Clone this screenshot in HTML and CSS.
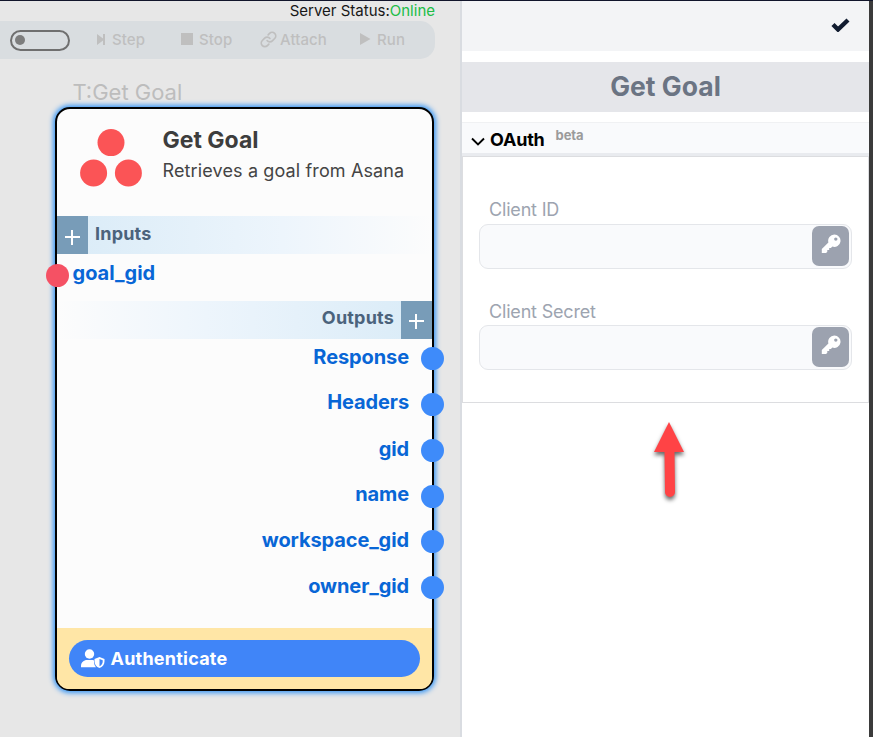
FILE: index.html
```html
<!DOCTYPE html>
<html lang="en">
<head>
<meta charset="utf-8">
<title>Get Goal</title>
<link rel="stylesheet" href="styles.css">
</head>
<body>
<div class="app">
  <main class="canvas">
    <div class="status"><span class="status-text">Server Status:<span class="online">Online</span></span></div>
    <div class="toolbar">
      <div class="toggle"><i class="knob"></i></div>
      <div class="tool step"><svg width="9" height="12" viewBox="0 0 9 12"><path d="M0 1l6 4.500V1h2v11H6V7.500L0 12z" fill="currentColor"/></svg><span>Step</span></div>
      <div class="tool stop"><svg width="12" height="12" viewBox="0 0 12 12"><path d="M0 0h12v12H0z" fill="currentColor"/></svg><span>Stop</span></div>
      <div class="tool attach"><svg width="17" height="17" viewBox="0 0 24 24" fill="none" stroke="currentColor" stroke-width="2.4" stroke-linecap="round"><path d="M10 13.500a5 5 0 0 0 7.400.4l3.300-3.300a5 5 0 0 0-7.200-7.200l-2 2M14 10.500a5 5 0 0 0-7.400-.4l-3.300 3.300a5 5 0 0 0 7.200 7.200l2-2"/></svg><span>Attach</span></div>
      <div class="tool run"><svg width="11" height="12" viewBox="0 0 11 12"><path d="M0 0l10.500 6L0 12z" fill="currentColor"/></svg><span>Run</span></div>
    </div>
    <div class="node-label"><span>T:Get Goal</span></div>
    <section class="node">
      <header class="node-head">
        <svg class="logo" width="62" height="58" viewBox="0 0 62 58" fill="#fb5456"><circle cx="31" cy="13.600" r="13.500"/><circle cx="13.600" cy="44" r="13.500"/><circle cx="48.400" cy="44" r="13.500"/></svg>
        <div class="node-titles">
          <h2>Get Goal</h2>
          <p><span>Retrieves a goal from Asana</span></p>
        </div>
      </header>
      <div class="band inputs"><b class="plus"></b><span>Inputs</span></div>
      <div class="port in"><i class="pin"></i><span>goal_gid</span></div>
      <div class="band outputs"><span>Outputs</span><b class="plus"></b></div>
      <div class="ports">
        <div class="port out"><span>Response</span><i class="pin"></i></div>
        <div class="port out"><span>Headers</span><i class="pin"></i></div>
        <div class="port out"><span>gid</span><i class="pin"></i></div>
        <div class="port out"><span>name</span><i class="pin"></i></div>
        <div class="port out"><span>workspace_gid</span><i class="pin"></i></div>
        <div class="port out"><span>owner_gid</span><i class="pin"></i></div>
      </div>
      <footer class="auth">
        <div class="auth-button">
          <svg width="24" height="20" viewBox="0 0 24 20" fill="#fff"><circle cx="8.500" cy="5" r="4.700"/><path d="M0 18.300V17c0-3.500 2.700-6 6.200-6h4.600c.8 0 1.600.2 2.200.4v1.100c0 2.300.7 4.400 2 5.800z"/><path fill-rule="evenodd" d="M18.500 8l5 2v2.500c0 3-1.800 5.300-5 6.500-3.200-1.200-5-3.500-5-6.500V10zM18.500 9.900v7.300c2-.9 3.200-2.400 3.200-4.700v-1.300z"/></svg>
          <span>Authenticate</span>
        </div>
      </footer>
    </section>
  </main>
  <aside class="panel">
    <div class="panel-bar"><svg width="19" height="14" viewBox="0 0 19 14"><path d="M2 6.500l5 5L17 2" fill="none" stroke="#111c30" stroke-width="4.400"/></svg></div>
    <h1 class="panel-title"><span>Get Goal</span></h1>
    <div class="section-head">
      <svg width="14" height="9" viewBox="0 0 14 9"><path d="M1 1.500l6 6 6-6" fill="none" stroke="#000" stroke-width="1.900"/></svg>
      <span class="section-name">OAuth</span><span class="beta">beta</span>
    </div>
    <div class="fields">
      <div class="field"><span class="label">Client ID</span>
        <div class="input"><div class="key"><svg width="20" height="20" viewBox="0 0 20 20"><path fill="#fff" fill-rule="evenodd" d="M13.300.500a6.200 6.200 0 1 1-1.900 12.100L9.900 14H8.200v1.900H6.300v1.900l-1.200 1.200H.800v-4l6.600-6.600A6.200 6.200 0 0 1 13.300.500zM14.800 3.400a1.700 1.700 0 1 0 0 3.400 1.700 1.700 0 0 0 0-3.400z"/></svg></div></div>
      </div>
      <div class="field"><span class="label second">Client Secret</span>
        <div class="input"><div class="key"><svg width="20" height="20" viewBox="0 0 20 20"><path fill="#fff" fill-rule="evenodd" d="M13.300.500a6.200 6.200 0 1 1-1.900 12.100L9.900 14H8.200v1.900H6.300v1.900l-1.200 1.200H.800v-4l6.600-6.600A6.200 6.200 0 0 1 13.300.500zM14.800 3.400a1.700 1.700 0 1 0 0 3.400 1.700 1.700 0 0 0 0-3.400z"/></svg></div></div>
      </div>
    </div>
    <svg class="arrow" width="40" height="90" viewBox="0 0 40 90"><path d="M20 7L35 37H25.500L26 77a5 5 0 0 1-10 0L15.500 37H5z" fill="#ff4345"/></svg>
  </aside>
</div>
</body>
</html>
```

FILE: styles.css
```css
* { box-sizing: border-box; }
body { margin: 0; font-family: Inter, "Liberation Sans", sans-serif; background: #fff; }
svg { display: block; flex: none; }
h1, h2, p { margin: 0; }

.app {
  display: flex;
  width: 873px;
  height: 737px;
  overflow: hidden;
  border-top: 1px solid #11152b;
}

/* Canvas */
.canvas { width: 460px; background: #e7e7e7; }
.status {
  height: 20px;
  padding-right: 25px;
  text-align: right;
  font-size: 15px;
  line-height: 19px;
  color: #171717;
}
.online { color: #20bd46; }
.toolbar {
  display: flex;
  align-items: center;
  width: 435px;
  height: 38px;
  padding-left: 10px;
  border-radius: 0 15px 15px 0;
  background: #d9dde0;
  color: #bfbfbf;
  font-size: 15px;
  font-weight: 500;
}
.toggle {
  display: flex;
  align-items: center;
  width: 60px;
  height: 21px;
  padding-left: 3px;
  border: 2px solid #6f6f6f;
  border-radius: 11px;
}
.knob { width: 10px; height: 10px; border-radius: 50%; background: #7d7d7d; }
.tool { display: flex; align-items: center; margin-bottom: 2px; }
.tool span { letter-spacing: .1px; }
.step { margin-left: 27px; gap: 6px; width: 84px; }
.stop { gap: 6px; width: 79px; }
.attach { gap: 3px; width: 100px; }
.run { gap: 6px; }
.node-label {
  height: 48px;
  padding: 20px 0 0 72.500px;
  font-size: 22px;
  line-height: 27px;
  color: #bdbdbd;
}

.node {
  position: relative;
  width: 379px;
  height: 584px;
  margin-left: 55px;
  border: 2px solid #000;
  border-radius: 15px;
  background: #fcfcfc;
  box-shadow: 0 0 5px 2px #3b98f5;
}
.node-head { display: flex; height: 107px; padding: 20px 0 0 23px; }
.node-titles { margin-left: 20.500px; }
.node-titles h2 { font-size: 23px; line-height: 28px; color: #3d3d3d; margin-top: -3px; }
.node-titles p { font-size: 18px; line-height: 24px; letter-spacing: .13px; color: #444; margin-top: 5px; }
.band {
  display: flex;
  height: 38px;
  font-size: 18px;
  font-weight: 700;
  line-height: 34px;
  letter-spacing: .2px;
  color: #4b637c;
}
.inputs { gap: 7px; line-height: 36px; background: linear-gradient(90deg, #d9ebf7, #edf5fc 60%, #fcfcfc); }
.outputs { justify-content: flex-end; gap: 7px; background: linear-gradient(270deg, #d9ebf7, #edf5fc 60%, #fcfcfc); }
.plus {
  width: 31px;
  height: 38px;
  background:
    linear-gradient(#fff, #fff) 8px 19px / 15px 2px no-repeat,
    linear-gradient(#fff, #fff) 14px 13px / 2px 15px no-repeat,
    #789cb8;
}
.port {
  position: relative;
  font-size: 20px;
  font-weight: 700;
  letter-spacing: -.1px;
  color: #0866d6;
}
.pin { position: absolute; width: 23px; height: 23px; border-radius: 50%; }
.in { height: 47px; padding-left: 15.500px; line-height: 39px; letter-spacing: 0; }
.in .pin { left: -11px; top: 9.500px; background: #f55164; }
.inputs .plus { background-position: 8px 20px, 14px 14px, 0 0; }
.ports { height: 289px; }
.out { height: 45.800px; padding-right: 23px; text-align: right; line-height: 36px; }
.out .pin { right: -12px; top: 8.300px; background: #3e8bfa; }
.out:nth-child(2) span { position: relative; top: -1px; }
.auth {
  height: 61px;
  padding: 12px 12px 0;
  border-radius: 0 0 12px 12px;
  background: #ffe6a6;
}
.auth-button {
  display: flex;
  align-items: center;
  gap: 5.500px;
  height: 37px;
  padding-left: 12px;
  border-radius: 19px;
  background: #4085f8;
  color: #fff;
  font-size: 18px;
  font-weight: 700;
  letter-spacing: .22px;
}

/* Configuration panel */
.panel {
  width: 413px;
  border-left: 2px solid #d9dce1;
  border-right: 4px solid #3b3b3b;
  background: #fff;
}
.panel-bar {
  display: flex;
  justify-content: flex-end;
  height: 50px;
  padding: 17px 19px 0 0;
  background: #f3f4f6;
}
.panel-title {
  height: 50px;
  margin-top: 11px;
  background: #e5e6ea;
  font-size: 26.500px;
  line-height: 48px;
  text-align: center;
  color: #6b7483;
}
.section-head {
  display: flex;
  align-items: center;
  height: 34px;
  margin-top: 10px;
  padding-left: 9px;
  border-top: 1px solid #f0f1f3;
  border-bottom: 3px solid #e9ebef;
  background: #f9fafc;
}
.section-head svg { margin-top: 6px; }
.section-name { margin: 3px 0 0 5px; font-size: 18px; font-weight: 700; line-height: 24px; letter-spacing: -.2px; }
.beta { margin: -6px 0 0 11px; font-size: 13px; font-weight: 700; letter-spacing: -.1px; color: #9b9b9b; }
.fields {
  height: 247px;
  padding: 41px 16px 0;
  border: 1px solid #dcdde0;
}
.field { height: 101px; }
.label { display: block; height: 26px; padding-left: 10px; font-size: 18px; line-height: 24px; letter-spacing: -.18px; color: #9da4b0; }
.second { line-height: 26px; }
.input {
  display: flex;
  justify-content: flex-end;
  width: 373px;
  height: 45px;
  padding: 1px 2px;
  border: 1px solid #e4e6ea;
  border-radius: 9px;
  background: #f9fafc;
}
.key {
  display: flex;
  justify-content: center;
  width: 37px;
  height: 40px;
  padding-top: 8px;
  border-radius: 7px;
  background: #9ca2af;
}
.arrow { margin: 12px 0 0 187px; filter: drop-shadow(0 3px 2px rgba(0, 0, 0, .6)); }
```
